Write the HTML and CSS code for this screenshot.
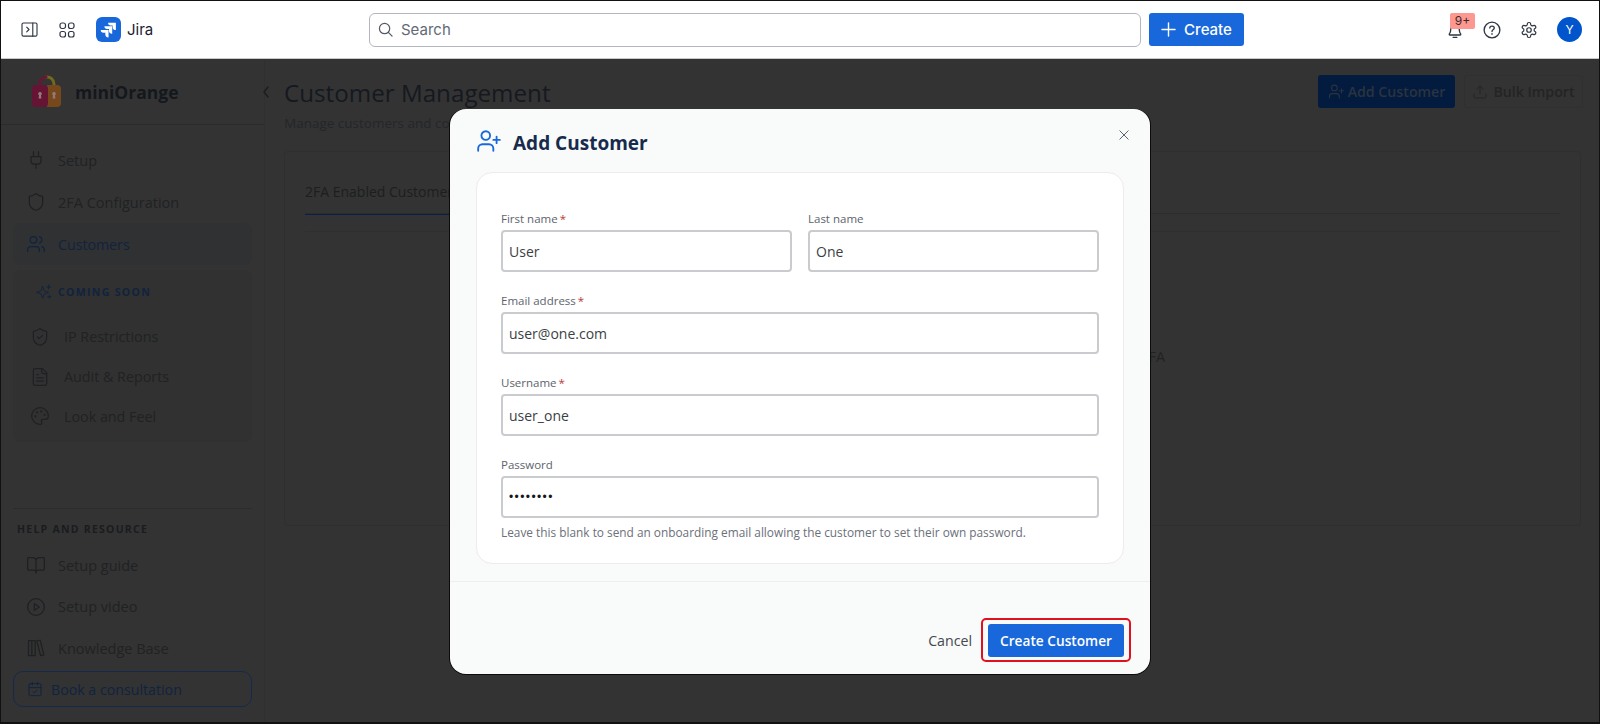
FILE: index.html
```html
<!DOCTYPE html>
<html lang="en">
<head>
<meta charset="utf-8">
<title>Customer Management</title>
<link rel="stylesheet" href="styles.css">
</head>
<body>
<svg class="sprite" aria-hidden="true">
  <symbol id="i-plug" viewBox="0 0 24 24"><path d="M12 22v-5M9 8V2M15 8V2M18 8v5a4 4 0 0 1-4 4h-4a4 4 0 0 1-4-4V8Z"/></symbol>
  <symbol id="i-shield" viewBox="0 0 24 24"><path d="M20 13c0 5-3.5 7.5-7.66 8.95a1 1 0 0 1-.67-.01C7.5 20.5 4 18 4 13V6a1 1 0 0 1 1-1c2 0 4.5-1.2 6.24-2.72a1.17 1.17 0 0 1 1.52 0C14.51 3.81 17 5 19 5a1 1 0 0 1 1 1z"/></symbol>
  <symbol id="i-shield-check" viewBox="0 0 24 24"><path d="M20 13c0 5-3.5 7.5-7.66 8.95a1 1 0 0 1-.67-.01C7.5 20.5 4 18 4 13V6a1 1 0 0 1 1-1c2 0 4.5-1.2 6.24-2.72a1.17 1.17 0 0 1 1.52 0C14.51 3.81 17 5 19 5a1 1 0 0 1 1 1z"/><path d="m9 12 2 2 4-4"/></symbol>
  <symbol id="i-users" viewBox="0 0 24 24"><path d="M16 21v-2a4 4 0 0 0-4-4H6a4 4 0 0 0-4 4v2"/><circle cx="9" cy="7" r="4"/><path d="M22 21v-2a4 4 0 0 0-3-3.87M16 3.13a4 4 0 0 1 0 7.75"/></symbol>
  <symbol id="i-user-plus" viewBox="0 0 24 24"><path d="M16 21v-2a4 4 0 0 0-4-4H6a4 4 0 0 0-4 4v2"/><circle cx="9" cy="7" r="4"/><path d="M19 8v6M22 11h-6"/></symbol>
  <symbol id="i-sparkles" viewBox="0 0 24 24"><path d="M10 3.500 12.400 10.200 19 12.600l-6.600 2.400L10 21.500 7.600 15 1 12.600l6.600-2.400Z"/><path d="M19 1.500v6M16 4.500h6M20 16.500v5M17.500 19h5"/></symbol>
  <symbol id="i-file" viewBox="0 0 24 24"><path d="M15 2H6a2 2 0 0 0-2 2v16a2 2 0 0 0 2 2h12a2 2 0 0 0 2-2V7Z"/><path d="M14 2v4a2 2 0 0 0 2 2h4M8 13h8M8 17h8M8 9h2"/></symbol>
  <symbol id="i-palette" viewBox="0 0 24 24"><path d="M12 22a10 10 0 1 1 10-10c0 2.800-2.200 4-4 4h-2.500a2 2 0 0 0-1.500 3.300c.5.600.6 2.700-2 2.700Z"/><circle cx="13.500" cy="6.500" r=".6"/><circle cx="17.500" cy="10.500" r=".6"/><circle cx="6.500" cy="12.500" r=".6"/><circle cx="8.500" cy="7.500" r=".6"/></symbol>
  <symbol id="i-book" viewBox="0 0 24 24"><path d="M12 7v15M3 18a1 1 0 0 1-1-1V4a1 1 0 0 1 1-1h5a4 4 0 0 1 4 4 4 4 0 0 1 4-4h5a1 1 0 0 1 1 1v13a1 1 0 0 1-1 1h-6a3 3 0 0 0-3 3 3 3 0 0 0-3-3Z"/></symbol>
  <symbol id="i-play" viewBox="0 0 24 24"><circle cx="12" cy="12" r="10"/><path d="m10 8 6 4-6 4Z"/></symbol>
  <symbol id="i-library" viewBox="0 0 24 24"><path d="M3 3h4v18H3ZM7 3h4v18H7ZM13 3.500l4 -.8 4.500 17.500-4 1Z"/></symbol>
  <symbol id="i-calendar" viewBox="0 0 24 24"><path d="M8 2v4M16 2v4"/><rect x="3" y="4" width="18" height="18" rx="2"/><path d="M3 10h18M9 16l2 2 4-4"/></symbol>
  <symbol id="i-upload" viewBox="0 0 24 24"><path d="M21 15v4a2 2 0 0 1-2 2H5a2 2 0 0 1-2-2v-4M17 8l-5-5-5 5M12 3v12"/></symbol>
</svg>

<div class="page">
  <header class="topbar">
    <div class="top-left">
      <svg class="tb-icon panel-toggle" viewBox="0 0 18 16"><rect x="1" y="1" width="16" height="14" rx="1.500"/><path d="M12.500 1v14M6 5.500 8.500 8 6 10.500"/></svg>
      <svg class="tb-icon" viewBox="0 0 16 16"><rect x="1" y="1" width="5.500" height="5.500" rx="2"/><rect x="9.500" y="1" width="5.500" height="5.500" rx="2"/><rect x="1" y="9.500" width="5.500" height="5.500" rx="2"/><rect x="9.500" y="9.500" width="5.500" height="5.500" rx="2"/></svg>
      <div class="brand">
        <span class="jira-logo">
          <svg viewBox="0 0 24 24"><path d="M19.500 4H11a3 3 0 0 0 3 3h2v2a3 3 0 0 0 3.500 3Z"/><path d="M15.500 8H7a3 3 0 0 0 3 3h2v2a3 3 0 0 0 3.500 3Z"/><path d="M11.500 12H3a3 3 0 0 0 3 3h2v2a3 3 0 0 0 3.500 3Z"/></svg>
        </span>
        <span class="brand-name">Jira</span>
      </div>
    </div>
    <div class="top-center">
      <div class="search">
        <svg class="search-icon" viewBox="0 0 16 16"><circle cx="7" cy="7" r="5.500"/><path d="m11 11 4 4"/></svg>
        <span>Search</span>
      </div>
      <button class="create"><svg viewBox="0 0 16 16"><path d="M8 1v14M1 8h14"/></svg>Create</button>
    </div>
    <div class="top-right">
      <div class="bell">
        <svg class="tb-icon" viewBox="0 0 16 16"><path d="M3 11.500c.8-1 1.200-2 1.200-4 0-2.500 1.500-4.500 3.800-4.500s3.800 2 3.800 4.500c0 2 .4 3 1.200 4 .3.400 0 .9-.4.900H3.400c-.4 0-.7-.5-.4-.9ZM6.300 14.500h3.400"/></svg>
        <span class="badge">9+</span>
      </div>
      <svg class="tb-icon" viewBox="0 0 16 16"><circle cx="8" cy="8" r="7"/><path d="M6 6.200A2 2 0 0 1 8 4.500c1.200 0 2 .8 2 1.800 0 1.500-2 1.500-2 3"/><path d="M8 11.200v.6"/></svg>
      <svg class="tb-icon gear" viewBox="0 0 24 24"><path d="M12.220 2h-.44a2 2 0 0 0-2 2v.18a2 2 0 0 1-1 1.730l-.43.250a2 2 0 0 1-2 0l-.15-.080a2 2 0 0 0-2.730.730l-.220.380a2 2 0 0 0 .730 2.730l.150.100a2 2 0 0 1 1 1.720v.510a2 2 0 0 1-1 1.740l-.150.090a2 2 0 0 0-.730 2.730l.220.380a2 2 0 0 0 2.730.730l.150-.080a2 2 0 0 1 2 0l.430.250a2 2 0 0 1 1 1.730V20a2 2 0 0 0 2 2h.44a2 2 0 0 0 2-2v-.18a2 2 0 0 1 1-1.730l.430-.250a2 2 0 0 1 2 0l.150.080a2 2 0 0 0 2.730-.730l.220-.390a2 2 0 0 0-.730-2.730l-.150-.080a2 2 0 0 1-1-1.740v-.500a2 2 0 0 1 1-1.740l.150-.090a2 2 0 0 0 .730-2.730l-.220-.380a2 2 0 0 0-2.730-.730l-.150.080a2 2 0 0 1-2 0l-.430-.250a2 2 0 0 1-1-1.730V4a2 2 0 0 0-2-2Z"/><circle cx="12" cy="12" r="3"/></svg>
      <span class="avatar">Y</span>
    </div>
  </header>

  <div class="workspace">
    <aside class="sidebar">
      <div class="side-logo">
        <svg class="lock" viewBox="0 0 30 34">
          <path class="lock-top-right" d="M15 3a7 7 0 0 1 8 7v4"/>
          <path class="lock-top-left" d="M9 14v-4a7 7 0 0 1 6-7"/>
          <rect class="lock-right" x="14" y="11" width="16" height="22" rx="4"/>
          <rect class="lock-left" x="1" y="11" width="16" height="22" rx="4"/>
          <path class="lock-hole" d="M9 18a1.800 1.800 0 0 1 1 3.300l.4 3.200H7.600l.4-3.200A1.800 1.800 0 0 1 9 18ZM23 18a1.800 1.800 0 0 1 1 3.300l.4 3.200h-2.800l.4-3.200A1.800 1.800 0 0 1 23 18Z"/>
        </svg>
        <span>miniOrange</span>
      </div>
      <nav class="nav">
        <a class="nav-item"><svg class="ico"><use href="#i-plug"/></svg>Setup</a>
        <a class="nav-item"><svg class="ico"><use href="#i-shield"/></svg>2FA Configuration</a>
        <a class="nav-item active"><svg class="ico"><use href="#i-users"/></svg>Customers</a>
      </nav>
      <section class="soon">
        <div class="soon-head"><svg class="ico-sm"><use href="#i-sparkles"/></svg>COMING SOON</div>
        <a class="soon-item"><svg class="ico"><use href="#i-shield-check"/></svg>IP Restrictions</a>
        <a class="soon-item"><svg class="ico"><use href="#i-file"/></svg>Audit &amp; Reports</a>
        <a class="soon-item"><svg class="ico"><use href="#i-palette"/></svg>Look and Feel</a>
      </section>
      <section class="help">
        <div class="help-title">HELP AND RESOURCE</div>
        <a class="help-item"><svg class="ico"><use href="#i-book"/></svg>Setup guide</a>
        <a class="help-item"><svg class="ico"><use href="#i-play"/></svg>Setup video</a>
        <a class="help-item"><svg class="ico"><use href="#i-library"/></svg>Knowledge Base</a>
        <a class="consult"><svg class="ico-cal"><use href="#i-calendar"/></svg>Book a consultation</a>
      </section>
    </aside>

    <main class="main">
      <span class="collapse"><svg viewBox="0 0 8 12"><path d="M6 1 2 6l4 5"/></svg></span>
      <div class="main-head">
        <div class="head-text">
          <h1>Customer Management</h1>
          <p class="sub">Manage customers and configure their 2FA settings</p>
        </div>
        <div class="head-actions">
          <button class="btn-add"><svg class="ico"><use href="#i-user-plus"/></svg>Add Customer</button>
          <button class="btn-bulk"><svg class="ico-sm"><use href="#i-upload"/></svg>Bulk Import</button>
        </div>
      </div>
      <section class="panel">
        <div class="tabs"><span class="tab">2FA Enabled Customers</span></div>
        <div class="panel-body">
          <p>No customers found. Click Add Customer to start managing their 2FA</p>
        </div>
      </section>
    </main>

    <div class="backdrop">
      <div class="modal">
        <div class="modal-head">
          <svg class="modal-icon"><use href="#i-user-plus"/></svg>
          <h2>Add Customer</h2>
          <svg class="close" viewBox="0 0 12 12"><path d="m1 1 10 10M11 1 1 11"/></svg>
        </div>
        <form class="form-card">
          <div class="row-2">
            <div class="field"><label>First name<em>*</em></label><div class="input">User</div></div>
            <div class="field"><label>Last name</label><div class="input">One</div></div>
          </div>
          <div class="field"><label>Email address<em>*</em></label><div class="input">user@one.com</div></div>
          <div class="field"><label>Username<em>*</em></label><div class="input">user_one</div></div>
          <div class="field"><label>Password</label><div class="input pass">••••••••</div>
            <p class="hint">Leave this blank to send an onboarding email allowing the customer to set their own password.</p>
          </div>
        </form>
        <div class="modal-foot">
          <button class="cancel">Cancel</button>
          <div class="ring"><button class="submit">Create Customer</button></div>
        </div>
      </div>
    </div>
  </div>
</div>
</body>
</html>
```
FILE: styles.css
```css
* { box-sizing: border-box; }
html, body { margin: 0; height: 100%; }
body { font-family: "Open Sans", "Noto Sans", sans-serif; background: #333; overflow: hidden; }
.sprite { position: absolute; width: 0; height: 0; }
p, h1, h2 { margin: 0; }
button { font-family: inherit; border: 0; cursor: pointer; }
svg { fill: none; stroke: currentColor; stroke-width: 2; stroke-linecap: round; stroke-linejoin: round; flex: none; }

.page { height: 724px; border: 1px solid #111; border-bottom-width: 2px; display: flex; flex-direction: column; }

/* top bar */
.topbar { height: 58px; flex: none; background: #fff; display: flex; align-items: center; position: relative; border-bottom: 1px solid #c9c9c9; font-family: Inter, Roboto, sans-serif; }
.top-left { display: flex; align-items: center; width: 368px; padding-left: 20px; gap: 21px; color: #3b4352; }
.tb-icon { width: 18px; height: 18px; stroke-width: 1.2; color: #2f3542; }
.top-left .tb-icon { width: 16px; height: 16px; }
.top-left .panel-toggle { width: 17px; height: 15px; }
.gear { stroke-width: 1.6; }
.brand { display: flex; align-items: center; gap: 6px; }
.jira-logo { width: 25px; height: 25px; background: #1868db; border-radius: 6px; display: flex; align-items: center; justify-content: center; }
.jira-logo svg { width: 22px; height: 22px; fill: #fff; stroke: none; }
.brand-name { font-size: 15px; color: #1c2230; }
.top-center { display: flex; align-items: center; gap: 8px; }
.search { width: 772px; height: 34px; border: 1px solid #b3b7bd; border-radius: 6px; display: flex; align-items: center; gap: 8px; padding-left: 8px; color: #626a76; font-size: 15px; }
.search-icon { width: 15px; height: 15px; stroke-width: 1.3; color: #555b66; }
.create { width: 95px; height: 33px; background: #1868db; color: #fff; border-radius: 3px; font-size: 15px; font-weight: 500; display: flex; align-items: center; justify-content: center; gap: 8px; font-family: inherit; }
.create svg { width: 15px; height: 15px; stroke-width: 1.5; }
.top-right { margin-left: auto; display: flex; align-items: center; gap: 19px; padding-right: 17px; }
.bell { position: relative; width: 18px; height: 18px; display: flex; }
.badge { position: absolute; left: 4px; top: -8px; width: 25px; height: 16px; background: #fd9891; border-radius: 2px; font-size: 12px; line-height: 16px; text-align: center; color: #3a2a2a; }
.avatar { width: 25px; height: 25px; border-radius: 50%; background: #0055cc; color: #fff; font-size: 12px; display: flex; align-items: center; justify-content: center; }

/* workspace, dimmed behind the dialog */
.workspace { flex: 1; display: flex; position: relative; min-height: 0; background: #333; color: #202224; }
.sidebar { width: 264px; flex: none; display: flex; flex-direction: column; border-right: 1px solid #303030; padding-bottom: 15px; }
.side-logo { height: 66px; flex: none; display: flex; align-items: center; gap: 14px; padding-left: 30px; border-bottom: 1px solid #2b2b2b; font-size: 17.5px; font-weight: 700; color: #14181d; }
.lock { width: 30px; height: 34px; stroke: none; margin-top: -1px; }
.lock-top-left { stroke: #6b1535; stroke-width: 3; fill: none; }
.lock-top-right { stroke: #6f6a1e; stroke-width: 3; fill: none; }
.lock-left { fill: #661434; }
.lock-right { fill: #77481c; }
.lock-hole { fill: #94787a; }

.nav { padding: 14px 12px 0; }
.nav-item { height: 42px; display: flex; align-items: center; gap: 12px; padding-left: 13px; font-size: 14.5px; color: #202224; }
.nav-item.active { color: #12233d; background: #303133; border-radius: 8px; font-size: 14.2px; font-weight: 500; }
.nav-item.active .ico { color: #12233d; }
.ico { width: 20px; height: 20px; stroke-width: 1.5; color: #1e2023; }
.ico-sm { width: 16px; height: 16px; stroke-width: 1.4; }
.soon { margin: 5px 12px 0; padding: 10px 10px 6px; border-radius: 8px; background: #313131; }
.soon-head { height: 24px; display: flex; align-items: center; gap: 6px; padding-left: 13px; margin-bottom: 13px; font-size: 10.5px; font-weight: 700; letter-spacing: 1.35px; color: #10233f; }
.soon-head .ico-sm { color: #10233f; }
.soon-item { height: 39.7px; display: flex; align-items: center; gap: 14px; padding-left: 7px; font-size: 14.3px; color: #202224; }
.help { margin: auto 12px 0; border-top: 1px solid #2c2c2c; padding-top: 11px; }
.help-title { font-size: 10.5px; font-weight: 700; letter-spacing: 1.25px; color: #1a1c1f; margin: 0 0 7px 4px; line-height: 18px; }
.help-item { height: 41.5px; display: flex; align-items: center; gap: 12px; padding-left: 13px; font-size: 14.5px; color: #202224; }
.consult { height: 36px; display: flex; align-items: center; gap: 8px; padding-left: 13px; margin-top: 2px; border: 1px solid #142a4c; border-radius: 10px; font-size: 14.2px; font-weight: 500; color: #10233f; }
.ico-cal { width: 16px; height: 16px; stroke-width: 1.5; color: #10233f; }

.main { flex: 1; min-width: 0; position: relative; padding: 16px 16px 0 19px; }
.collapse { position: absolute; left: -3px; top: 27px; width: 8px; height: 12px; color: #1a1c1f; display: flex; }
.collapse svg { width: 8px; height: 12px; stroke-width: 1.3; }
.main-head { display: flex; justify-content: space-between; align-items: flex-start; height: 76px; }
.head-text { padding-top: 1px; }
h1 { font-size: 24.2px; line-height: 34px; font-weight: 500; color: #15191f; }
.sub { font-size: 13.5px; line-height: 22px; margin-top: 2px; color: #24262a; }
.head-actions { display: flex; gap: 9px; }
.btn-add { width: 137px; height: 33px; background: #031b3e; color: #2a3340; border-radius: 3px; font-size: 14.2px; font-weight: 600; display: flex; align-items: center; justify-content: center; gap: 3px; }
.btn-add .ico { color: #2a3340; width: 17px; height: 17px; }
.btn-bulk { width: 119px; height: 33px; background: transparent; border: 1px solid #303030; color: #242424; border-radius: 3px; font-size: 14.2px; font-weight: 600; display: flex; align-items: center; justify-content: center; gap: 5px; }
.panel { height: 375px; margin-right: 2px; border: 1px solid #2f2f2f; border-radius: 4px; padding: 28px 20px 0; }
.tabs { height: 34px; border-bottom: 1px solid #2c2c2c; }
.tab { display: inline-block; height: 33px; border-bottom: 1px solid #08204a; font-size: 14px; line-height: 20px; color: #1c1e20; }
.panel-body { margin-top: 17px; border-top: 1px solid #2f2f2f; padding-top: 115px; text-align: center; font-size: 14.5px; line-height: 20px; color: #202224; }

/* dialog */
.backdrop { position: absolute; inset: 0; display: flex; align-items: center; justify-content: center; padding-top: 2px; }
.modal { width: 700px; height: 565px; background: #f9fafa; border-radius: 16px; box-shadow: 1px 0 0 #0c0c0c, -1px 0 0 #0c0c0c, 0 1px 0 #0c0c0c; display: flex; flex-direction: column; }
.modal-head { height: 63px; flex: none; display: flex; align-items: center; padding: 5px 21px 0 26px; gap: 11px; }
.modal-icon { width: 26px; height: 26px; color: #1868db; stroke-width: 1.7; margin-top: -4px; }
h2 { font-size: 19px; font-weight: 700; color: #172b4d; margin-top: -1px; }
.close { width: 10px; height: 10px; margin-left: auto; margin-top: -16px; stroke-width: 1.2; color: #5b6370; }
.form-card { margin: 0 26px; height: 392px; flex: none; background: #fff; border: 1px solid #ececec; border-radius: 16px; padding: 36px 24px 0; display: flex; flex-direction: column; gap: 19px; }
.row-2 { display: grid; grid-template-columns: 1fr 1fr; gap: 16px; }
label { display: block; font-size: 11.5px; line-height: 20px; color: #5d636c; }
label em { font-style: normal; color: #b8383a; margin-left: 2px; }
.input { height: 42px; margin-top: 1px; border: 2px solid #c9cbce; border-radius: 4px; padding-left: 6px; display: flex; align-items: center; font-size: 14px; color: #3b3f45; background: #fff; }
.pass { color: #16181b; font-size: 12px; letter-spacing: 1.4px; font-family: "Liberation Sans", sans-serif; }
.hint { font-size: 11.85px; line-height: 16px; color: #6b7079; margin-top: 6px; }
.modal-foot { flex: 1; margin-top: 17px; border-top: 1px solid #eef0f0; display: flex; justify-content: flex-end; align-items: flex-start; gap: 9px; padding: 36px 19px 0 0; }
.cancel { background: transparent; height: 33px; margin-top: 6px; font-size: 14.2px; font-weight: 500; color: #44484f; padding: 0; }
.ring { width: 150px; height: 44px; border: 2px solid #e0101e; border-radius: 5px; padding: 4px 5px; }
.submit { display: block; width: 136px; height: 33px; background: #1868db; color: #fff; border-radius: 3px; font-size: 13.7px; font-weight: 600; padding: 0; }
```
